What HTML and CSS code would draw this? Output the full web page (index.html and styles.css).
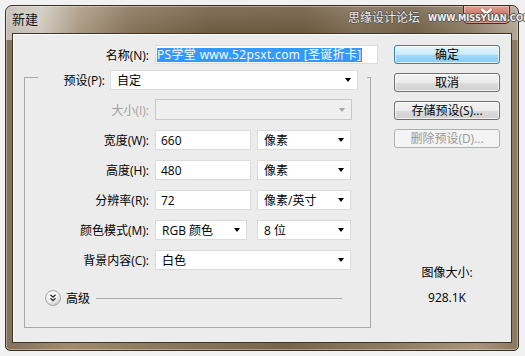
FILE: index.html
```html
<!DOCTYPE html>
<html lang="zh-CN">
<head>
<meta charset="utf-8">
<title>新建</title>
<link rel="stylesheet" href="styles.css">
</head>
<body>
<div class="window">
  <div class="titlebar">
    <span class="title">新建</span>
    <span class="close">
      <svg width="47" height="18" viewBox="0 0 47 18">
        <path d="M19 5 L28 13 M28 5 L19 13" stroke="#5a2a20" stroke-width="3.2" stroke-linecap="round" fill="none" opacity="0.6"/>
        <path d="M19 4.5 L28 12.5 M28 4.5 L19 12.5" stroke="#ffffff" stroke-width="2.4" stroke-linecap="round" fill="none"/>
      </svg>
    </span>
    <span class="watermark"><span class="wm-cn">思缘设计论坛</span><span class="wm-en">WWW.MISSYUAN.COM</span></span>
  </div>
  <div class="client">
    <div class="main">
      <div class="name-row">
        <span class="lbl name-lbl">名称(N):</span>
        <div class="textbox name-box"><span class="sel">PS学堂 www.52psxt.com [圣诞折卡]</span></div>
      </div>
      <fieldset class="group">
        <legend class="preset">
          <span class="lbl preset-lbl">预设(P):</span>
          <div class="dropdown preset-dd"><span>自定</span><i class="arrow"></i></div>
        </legend>
        <div class="row first">
          <span class="lbl off">大小(I):</span>
          <div class="dropdown size-dd disabled"><span></span><i class="arrow"></i></div>
        </div>
        <div class="row">
          <span class="lbl">宽度(W):</span>
          <div class="textbox num">660</div>
          <div class="dropdown unit"><span>像素</span><i class="arrow"></i></div>
        </div>
        <div class="row">
          <span class="lbl">高度(H):</span>
          <div class="textbox num">480</div>
          <div class="dropdown unit"><span>像素</span><i class="arrow"></i></div>
        </div>
        <div class="row">
          <span class="lbl">分辨率(R):</span>
          <div class="textbox num">72</div>
          <div class="dropdown unit"><span>像素/英寸</span><i class="arrow"></i></div>
        </div>
        <div class="row">
          <span class="lbl">颜色模式(M):</span>
          <div class="dropdown mode"><span>RGB 颜色</span><i class="arrow"></i></div>
          <div class="dropdown unit"><span>8 位</span><i class="arrow"></i></div>
        </div>
        <div class="row">
          <span class="lbl">背景内容(C):</span>
          <div class="dropdown wide"><span>白色</span><i class="arrow"></i></div>
        </div>
        <div class="adv">
          <span class="adv-btn">
            <svg width="16" height="16" viewBox="0 0 16 16">
              <defs>
                <radialGradient id="g" cx="40%" cy="30%" r="75%">
                  <stop offset="0" stop-color="#ffffff"/>
                  <stop offset="0.6" stop-color="#eeeeee"/>
                  <stop offset="1" stop-color="#c4c4c4"/>
                </radialGradient>
              </defs>
              <circle cx="8" cy="8" r="7.5" fill="url(#g)" stroke="#a8a8a8"/>
              <path d="M5.5 4.8 L8 7.2 L10.5 4.8 M5.5 8.3 L8 10.7 L10.5 8.3" stroke="#2a2a2a" stroke-width="1.3" fill="none"/>
            </svg>
          </span>
          <span class="adv-lbl">高级</span>
          <span class="adv-line"></span>
        </div>
      </fieldset>
    </div>
    <div class="side">
      <button class="btn default">确定</button>
      <button class="btn">取消</button>
      <button class="btn">存储预设(S)...</button>
      <button class="btn" disabled>删除预设(D)...</button>
      <div class="info">
        <div>图像大小:</div>
        <div class="size-val">928.1K</div>
      </div>
    </div>
  </div>
</div>
</body>
</html>
```
FILE: styles.css
```css
* { box-sizing: border-box; }
html, body { margin: 0; padding: 0; }
body {
  width: 525px;
  height: 356px;
  overflow: hidden;
  background: #f1f1f1;
  font-family: "Open Sans", "Noto Sans CJK SC", sans-serif;
  font-size: 12px;
  color: #000;
}
.window {
  position: relative;
  margin: 5px 0 0 5px;
  width: 514px;
  height: 346px;
  padding: 0 6px 7px 6px;
  border: 1px solid #3a3024;
  border-radius: 7px 7px 5px 5px;
  background:
    linear-gradient(180deg, rgba(255,255,255,0.14), rgba(255,255,255,0) 26px) top left / 100% 34px no-repeat,
    linear-gradient(90deg, #c2bcb1 0%, #cec8be 7%, #ab9b85 14%, #87735a 24%, #6f5b41 40%, #6c583e 58%, #7f6c54 68%, #74624a 80%, #8d7c66 90%, #b2a795 100%) top left / 100% 34px no-repeat,
    linear-gradient(90deg, #84705a 0%, #a08b6d 12%, #8c785c 30%, #77644b 55%, #8f7b5f 75%, #a6947a 92%, #8a7862 100%);
  box-shadow: inset 0 0 0 1px rgba(255,255,255,0.35);
  display: flex;
  flex-direction: column;
}
.titlebar {
  height: 27px;
  display: flex;
  align-items: flex-start;
}
.title {
  font-family: "Noto Sans CJK SC", sans-serif;
  font-size: 13px;
  line-height: 16px;
  padding-top: 5px;
  color: #111;
  text-shadow: 0 0 6px rgba(255,255,255,0.7);
}
.close {
  margin-left: auto;
  margin-right: 2px;
  width: 47px;
  height: 18px;
  border: 1px solid #4b2a22;
  border-top: none;
  border-radius: 0 0 5px 5px;
  background: linear-gradient(180deg, #dea092 0%, #d07c6b 45%, #bd5442 55%, #c9705e 100%);
  box-shadow: inset 0 0 0 1px rgba(255,255,255,0.35);
}
.close svg { display: block; margin: -1px 0 0 -1px; }
.watermark {
  position: absolute;
  left: 342px;
  top: 3px;
  display: flex;
  align-items: center;
  gap: 8px;
  white-space: nowrap;
  pointer-events: none;
}
.wm-cn {
  font-family: "Noto Sans CJK SC", sans-serif;
  font-size: 12px;
  line-height: 16px;
  color: #ecebe8;
  text-shadow: 1px 0 0 #555, -1px 0 0 #555, 0 1px 0 #555, 0 -1px 0 #555;
}
.wm-en {
  font-family: "DejaVu Sans", sans-serif;
  font-weight: bold;
  font-size: 8.3px;
  line-height: 12px;
  color: #f2f0ec;
  text-shadow: 1px 0 0 #555, -1px 0 0 #555, 0 1px 0 #555, 0 -1px 0 #555;
  margin-top: 2px;
}
.client {
  flex: 1;
  background: #ececec;
  border: 1px solid #3e3428;
  box-shadow: inset 1px 1px 0 #ffffff;
  display: flex;
  gap: 16px;
  padding: 11px 11px 0 11px;
}
.main { width: 354px; }
.lbl { white-space: nowrap; }
.name-row {
  display: flex;
  height: 19px;
  align-items: center;
}
.name-lbl { width: 125px; text-align: right; margin-right: 6px; }
.textbox {
  background: #fff;
  border: 1px solid #dcdcdc;
  height: 100%;
  display: flex;
  align-items: center;
  white-space: nowrap;
}
.name-box { width: 223px; padding-left: 1px; }
.sel {
  background: #3399ff;
  color: #fff;
  line-height: 14px;
  letter-spacing: 0.35px;
}
.group {
  margin: 0;
  padding: 0 0 20px 0;
  width: 347px;
  border: 1px solid #a9a9a9;
}
.preset {
  margin-left: 13px;
  padding: 6px 9px 0 0;
  display: flex;
  align-items: center;
}
.preset-lbl { width: 67px; text-align: right; margin-right: 5px; }
.preset-dd { width: 248px; height: 22px; }
.row {
  display: flex;
  align-items: center;
  height: 20px;
  margin-top: 10px;
}
.row.first { height: 21px; margin-top: 9px; }
.row .lbl { width: 124px; text-align: right; margin-right: 6px; }
.lbl.off { color: #a2a2a2; }
.dropdown {
  height: 100%;
  background: #fff;
  border: 1px solid #dcdcdc;
  display: flex;
  align-items: center;
  padding-left: 6px;
  white-space: nowrap;
}
.arrow {
  margin-left: auto;
  margin-right: 6px;
  width: 0;
  height: 0;
  border-left: 3.5px solid transparent;
  border-right: 3.5px solid transparent;
  border-top: 4px solid #000;
}
.dropdown.disabled {
  background: #efefef;
  border-color: #c9c9c9;
}
.dropdown.disabled .arrow { border-top-color: #a6a6a6; }
.size-dd { width: 197px; }
.num { width: 96px; padding-left: 5px; margin-right: 6px; }
.unit { width: 94px; }
.mode { width: 92px; margin-right: 10px; }
.wide { width: 196px; }
.adv {
  display: flex;
  align-items: center;
  height: 18px;
  margin-top: 19px;
  padding-left: 20px;
}
.adv-btn { width: 16px; height: 16px; }
.adv-btn svg { display: block; }
.adv-lbl { margin-left: 5px; font-size: 12px; }
.adv-line {
  flex: 1;
  height: 1px;
  background: #a9a9a9;
  margin-left: 6px;
  margin-right: 28px;
}
.side {
  width: 106px;
  display: flex;
  flex-direction: column;
  gap: 9px;
}
.btn {
  width: 106px;
  height: 19px;
  padding: 0;
  border: 1px solid #707070;
  border-radius: 3px;
  background: linear-gradient(180deg, #f3f3f3 0%, #ebebeb 50%, #dddddd 51%, #cfcfcf 100%);
  box-shadow: inset 0 0 0 1px rgba(255,255,255,0.7);
  font: inherit;
  line-height: 16px;
  color: #000;
}
.btn.default {
  border-color: #3c7fb1;
  background: linear-gradient(180deg, #e8f6fd 0%, #c9e9f9 50%, #a6daf5 51%, #8acbee 100%);
}
.btn:disabled {
  border-color: #adb2b5;
  background: #f4f4f4;
  box-shadow: none;
  color: #9a9a9a;
}
.info {
  margin-top: 108px;
  text-align: center;
  line-height: 16px;
}
.size-val { margin-top: 9px; }
```
